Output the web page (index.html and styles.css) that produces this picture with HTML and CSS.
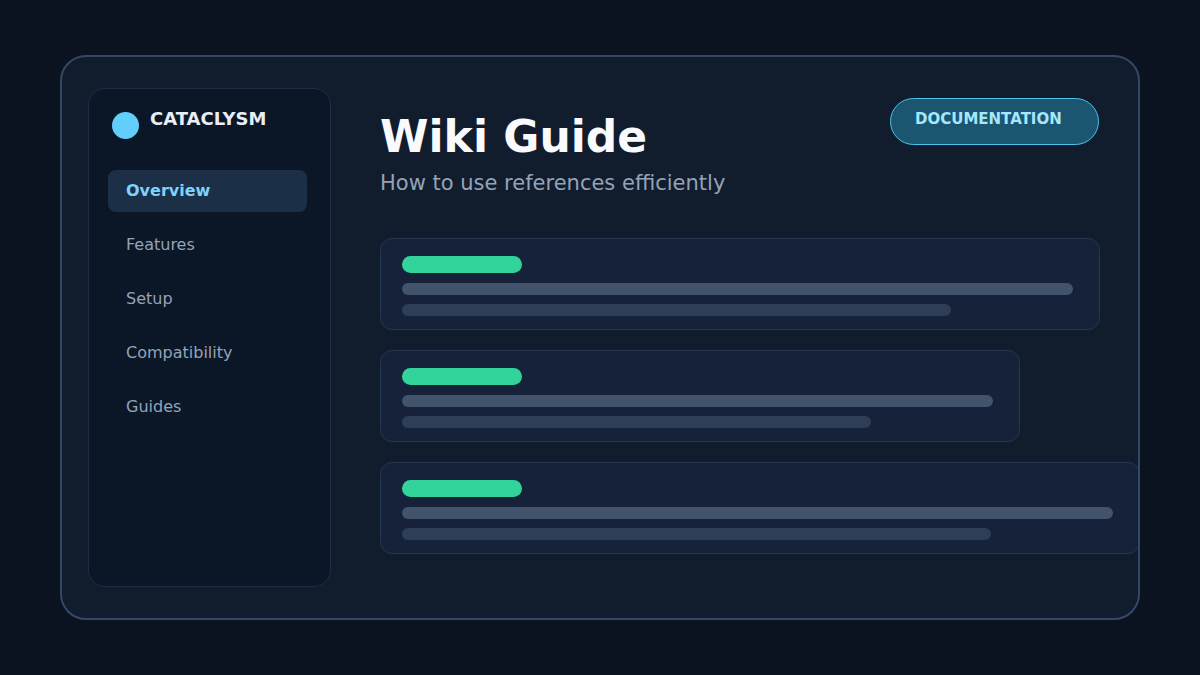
FILE: index.html
```html
<!DOCTYPE html>
<html lang="en">
<head>
    <meta charset="UTF-8">
    <meta name="viewport" content="width=device-width, initial-scale=1.0">
    <title>Wiki Guide - Cataclysm</title>
    <link rel="stylesheet" href="styles.css">
</head>
<body>

<div class="frame">
    <aside class="sidebar">
        <div class="brand">
            <span class="brand-dot"></span>
            <span class="brand-name">CATACLYSM</span>
        </div>
        <nav class="nav">
            <a class="nav-item active" href="#">Overview</a>
            <a class="nav-item" href="#">Features</a>
            <a class="nav-item" href="#">Setup</a>
            <a class="nav-item" href="#">Compatibility</a>
            <a class="nav-item" href="#">Guides</a>
        </nav>
    </aside>

    <main class="content">
        <header class="header">
            <div class="heading">
                <h1>Wiki Guide</h1>
                <p class="subtitle">How to use references efficiently</p>
            </div>
            <a class="doc-button" href="#">DOCUMENTATION</a>
        </header>

        <section class="cards">
            <div class="card" style="width: 720px">
                <div class="tag"></div>
                <div class="line line-main"></div>
                <div class="line line-sub" style="width: 549px"></div>
            </div>
            <div class="card" style="width: 640px">
                <div class="tag"></div>
                <div class="line line-main"></div>
                <div class="line line-sub" style="width: 469px"></div>
            </div>
            <div class="card" style="width: 760px">
                <div class="tag"></div>
                <div class="line line-main"></div>
                <div class="line line-sub" style="width: 589px"></div>
            </div>
        </section>
    </main>
</div>

</body>
</html>
```

FILE: styles.css
```css
body {
    font-family: 'DejaVu Sans', Verdana, sans-serif;
    background-color: #0b1220;
    margin: 0;
    padding: 0;
    height: 100vh;
    display: flex;
    justify-content: center;
    align-items: center;
}

.frame {
    box-sizing: border-box;
    width: 1080px;
    height: 565px;
    background-color: #111c2d;
    border: 2px solid #334766;
    border-radius: 26px;
    padding: 31px 26px;
    display: flex;
    gap: 49px;
    overflow: hidden;
}

/* sidebar */

.sidebar {
    box-sizing: border-box;
    width: 243px;
    flex-shrink: 0;
    background-color: #0b1727;
    border: 1px solid #1f2e44;
    border-radius: 17px;
    padding: 22px 23px 0 19px;
}

.brand {
    display: flex;
    align-items: flex-start;
    gap: 11px;
    padding-left: 4px;
    height: 59px;
}

.brand-dot {
    width: 27px;
    height: 27px;
    border-radius: 50%;
    background-color: #62cefb;
    margin-top: 1px;
}

.brand-name {
    font-size: 18px;
    font-weight: bold;
    color: #e8eef6;
    margin-top: -3px;
}

.nav {
    display: flex;
    flex-direction: column;
    gap: 12px;
}

.nav-item {
    display: block;
    height: 42px;
    line-height: 41px;
    padding-left: 18px;
    border-radius: 8px;
    font-size: 16px;
    color: #94a3b8;
    text-decoration: none;
}

.nav-item.active {
    background-color: #1b2f47;
    color: #7dd3fc;
    font-weight: bold;
}

/* main column */

.content {
    width: 720px;
    flex-shrink: 0;
    padding-top: 10px;
}

.header {
    display: flex;
    justify-content: space-between;
    align-items: flex-start;
}

.heading {
    padding-top: 13px;
}

h1 {
    margin: 0;
    font-size: 44px;
    font-weight: bold;
    color: #f8fafc;
}

.subtitle {
    margin: 9px 0 0;
    font-size: 21px;
    color: #94a3b8;
}

.doc-button {
    box-sizing: border-box;
    width: 209px;
    height: 47px;
    margin-right: 1px;
    padding: 11px 24px 0;
    border: 1px solid #4cc3ee;
    border-radius: 24px;
    background-color: #1b5570;
    color: #a5e8fb;
    font-size: 15px;
    font-weight: bold;
    text-decoration: none;
}

/* placeholder cards */

.cards {
    margin-top: 43px;
    display: flex;
    flex-direction: column;
    gap: 20px;
}

.card {
    box-sizing: border-box;
    height: 92px;
    flex-shrink: 0;
    background-color: #15223a;
    border: 1px solid #253651;
    border-radius: 12px;
    padding: 17px 26px 0 21px;
}

.tag {
    width: 120px;
    height: 17px;
    border-radius: 9px;
    background-color: #34d399;
}

.line {
    height: 12px;
    border-radius: 6px;
}

.line-main {
    margin-top: 10px;
    background-color: #42536b;
}

.line-sub {
    margin-top: 9px;
    background-color: #2e3e56;
}
```
